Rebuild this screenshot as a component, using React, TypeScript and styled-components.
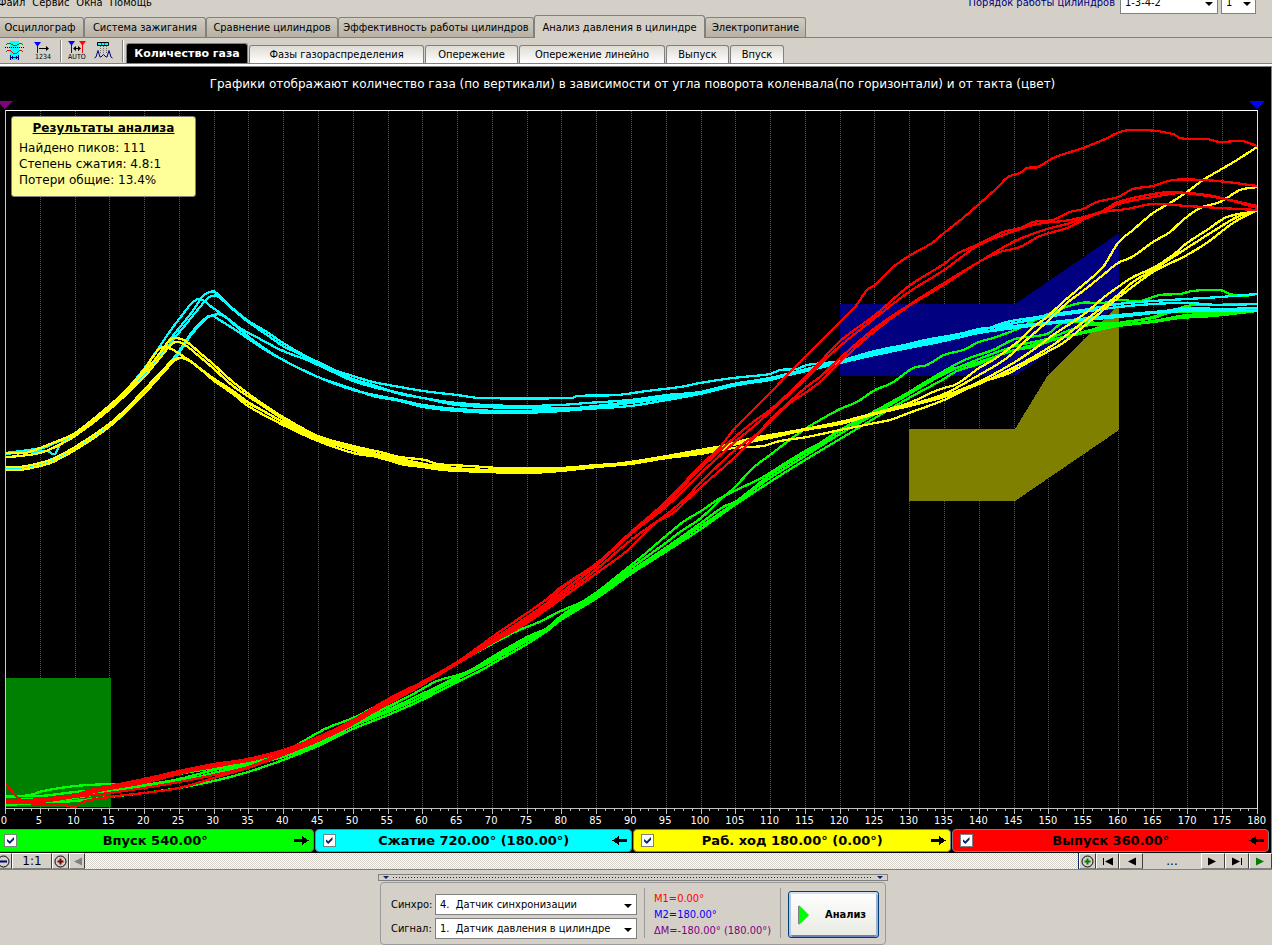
import React from 'react';
import styled, { createGlobalStyle } from 'styled-components';

const UI_FONT = '"DejaVu Sans Condensed", "DejaVu Sans", sans-serif';
const WIDE_FONT = '"DejaVu Sans", sans-serif';
const FACE = '#d4d0c8';
const SHADE = '#808080';

const GlobalStyle = createGlobalStyle`
  * { box-sizing: border-box; }
  body {
    margin: 0;
    background: ${FACE};
    font-family: ${UI_FONT};
    font-size: 11px;
    color: #000;
    overflow: hidden;
  }
  button, select, input { font: inherit; color: inherit; margin: 0; }
`;

const Window = styled.div`
  display: flex;
  flex-direction: column;
  height: 100vh;
  min-height: 560px;
  overflow: hidden;
`;

/* ---------- menu ---------- */

const MenuBar = styled.header`
  display: flex;
  align-items: center;
  flex: none;
  height: 25px;
  margin-top: -10px;
  padding-right: 16px;
`;

const MenuItem = styled.button`
  border: 0;
  padding: 0;
  margin-right: 7px;
  background: none;
  line-height: 14px;

  &:first-child { margin-left: -2px; }
`;

const OrderLabel = styled.label`
  margin-left: auto;
  margin-right: 5px;
  color: #000080;
`;

const Combo = styled.div<{ $width: number; $height: number }>`
  position: relative;
  width: ${(p) => p.$width}px;
  height: ${(p) => p.$height}px;

  &::after {
    content: '';
    position: absolute;
    right: 5px;
    top: 50%;
    margin-top: -1px;
    border: 4px solid transparent;
    border-top-color: #000;
    border-bottom: 0;
    pointer-events: none;
  }

  & + & { margin-left: 3px; }
`;

const ComboSelect = styled.select`
  appearance: none;
  display: block;
  width: 100%;
  height: 100%;
  padding: 0 14px 0 4px;
  border: 1px solid ${SHADE};
  border-radius: 0;
  background: #fff;
  outline: none;
`;

/* ---------- tabs ---------- */

const TabStrip = styled.nav`
  display: flex;
  align-items: flex-end;
  flex: none;
  height: 23px;
  margin-left: -4px;
  border-bottom: 1px solid ${SHADE};
`;

const MainTab = styled.button<{ $width: number; $active?: boolean }>`
  flex: none;
  width: ${(p) => p.$width}px;
  height: ${(p) => (p.$active ? 23 : 20)}px;
  margin-bottom: ${(p) => (p.$active ? -1 : 0)}px;
  padding: 0;
  border: 1px solid ${SHADE};
  border-bottom: 0;
  border-radius: 3px 3px 0 0;
  background: ${(p) => (p.$active ? FACE : 'linear-gradient(#d0ccc2, #b8b0a2)')};
  white-space: nowrap;
`;

const ToolBar = styled.div`
  display: flex;
  align-items: flex-end;
  flex: none;
  height: 26px;
  border-bottom: 1px solid ${SHADE};
`;

const ToolGroup = styled.div`
  display: flex;
  align-items: center;
  justify-content: space-between;
  align-self: center;
  width: 60px;
  height: 22px;
  padding: 0 9px 0 5px;
`;

const ToolButton = styled.button`
  display: flex;
  padding: 0;
  border: 0;
  background: none;
`;

const ToolDivider = styled.span`
  align-self: center;
  width: 2px;
  height: 22px;
  border-left: 1px solid ${SHADE};
  border-right: 1px solid #fff;
`;

const SubTabs = styled.nav`
  display: flex;
  align-items: flex-end;
  gap: 1px;
  margin-left: 2px;
`;

const SubTab = styled.button<{ $width: number; $active?: boolean }>`
  width: ${(p) => p.$width}px;
  height: ${(p) => (p.$active ? 20 : 18)}px;
  padding: 0;
  border: 1px solid ${SHADE};
  border-bottom: 0;
  border-radius: 3px 3px 0 0;
  background: ${(p) => (p.$active ? '#000' : 'linear-gradient(#dedbd4, #fff)')};
  color: ${(p) => (p.$active ? '#fff' : '#000')};
  font-family: ${(p) => (p.$active ? WIDE_FONT : UI_FONT)};
  font-weight: ${(p) => (p.$active ? 700 : 400)};
  white-space: nowrap;
`;

/* ---------- chart ---------- */

const ChartPanel = styled.main`
  position: relative;
  display: flex;
  flex-direction: column;
  flex: 1;
  min-height: 0;
  margin-top: 2px;
  border-top: 1px solid ${SHADE};
  border-right: 1px solid ${SHADE};
  background: #000;
  box-shadow: 0 -2px 0 #fff;
`;

const ChartTitle = styled.h1`
  flex: none;
  margin: 0;
  padding-right: 6px;
  color: #fff;
  font: 400 12px/34px ${WIDE_FONT};
  text-align: center;
  white-space: nowrap;
`;

const MarkerRow = styled.div`
  display: flex;
  justify-content: space-between;
  flex: none;
  height: 9px;
  margin: 0 6px 0 -3px;
`;

const Marker = styled.span<{ $color: string }>`
  width: 0;
  height: 0;
  border: 8px solid transparent;
  border-top-color: ${(p) => p.$color};
  border-bottom: 0;
`;

const Plot = styled.svg`
  display: block;
  flex: 1;
  min-height: 0;
  margin: 0 13px 0 5px;
  overflow: visible;
  shape-rendering: crispEdges;

  path, line, polyline { vector-effect: non-scaling-stroke; }
`;

const Ticks = styled.svg`
  display: block;
  flex: none;
  height: 5px;
  margin: 0 13px 0 5px;
  overflow: visible;
  shape-rendering: crispEdges;
`;

const AxisLabels = styled.div`
  display: flex;
  justify-content: space-between;
  flex: none;
  height: 15px;
  margin: 0 14px 0 4px;
  color: #fff;
  line-height: 14px;
`;

const AxisLabel = styled.span`
  display: flex;
  justify-content: center;
  width: 0;
`;

const ResultBox = styled.section`
  position: absolute;
  left: 11px;
  top: 49px;
  width: 185px;
  height: 81px;
  padding: 3px 7px;
  border: 1px solid ${SHADE};
  border-radius: 3px;
  background: #ffff99;
  font: 400 12px/16px ${WIDE_FONT};
  white-space: nowrap;
`;

const ResultTitle = styled.h2`
  margin: 0 0 4px;
  font-size: 12px;
  line-height: 16px;
  text-align: center;
  text-decoration: underline;
`;

const ResultLine = styled.p`
  margin: 0;
`;

const Legend = styled.div`
  display: grid;
  grid-template-columns: repeat(4, 1fr);
  gap: 1px;
  flex: none;
  margin: 0 2px 1px -4px;
`;

const LegendItem = styled.label<{ $color: string }>`
  display: flex;
  align-items: center;
  height: 23px;
  padding: 0 4px 0 7px;
  border: 1px solid ${SHADE};
  border-radius: 4px;
  background: ${(p) => p.$color};
  font: 700 13px/20px ${WIDE_FONT};
  white-space: nowrap;
`;

const LegendText = styled.span`
  flex: 1;
  text-align: center;
`;

const CheckBox = styled.input`
  appearance: none;
  width: 13px;
  height: 13px;
  border: 1px solid ${SHADE};
  background: #fff;

  &:checked::before {
    content: '';
    display: block;
    width: 7px;
    height: 7px;
    margin: 2px;
    background: #0a246a;
    clip-path: polygon(0 28%, 40% 62%, 100% 0, 100% 40%, 40% 100%, 0 62%);
  }
`;

/* ---------- scroll row ---------- */

const ScrollRow = styled.div`
  display: flex;
  flex: none;
  height: 17px;
  margin-left: -5px;
  border-bottom: 1px solid ${SHADE};
  background: ${FACE};
`;

const ScrollButton = styled.button<{ $width: number; $flat?: boolean }>`
  display: flex;
  align-items: center;
  justify-content: center;
  flex: none;
  width: ${(p) => p.$width}px;
  height: 16px;
  padding: 0;
  border: 1px solid ${(p) => (p.$flat ? FACE : '#fff')};
  border-right-color: ${(p) => (p.$flat ? FACE : '#404040')};
  border-bottom-color: ${(p) => (p.$flat ? FACE : SHADE)};
  background: ${FACE};
  font: 400 12px/12px ${WIDE_FONT};

  svg { flex: none; }
`;

const ScrollTrack = styled.div`
  flex: 1;
  border-right: 1px solid #0a246a;
  background: repeating-conic-gradient(#fff 0 25%, ${FACE} 0 50%) 0 0 / 2px 2px;
`;

/* ---------- bottom panel ---------- */

const Dock = styled.footer`
  display: flex;
  flex-direction: column;
  align-items: center;
  flex: none;
  padding: 4px 6px 0 0;
`;

const Splitter = styled.div`
  display: flex;
  align-items: center;
  justify-content: space-between;
  width: 510px;
  height: 7px;
  padding: 0 4px;
  border: 1px solid ${SHADE};
`;

const SplitterArrow = styled.span`
  border: 3px solid transparent;
  border-top-color: #0a246a;
  border-bottom: 0;
`;

const SplitterDots = styled.span`
  flex: 1;
  height: 1px;
  margin: 0 4px;
  background: repeating-linear-gradient(90deg, #0a246a 0 1px, transparent 1px 3px);
`;

const ControlPanel = styled.section`
  display: flex;
  width: 506px;
  height: 63px;
  margin-top: 1px;
  padding: 5px 6px 5px 10px;
  border: 1px solid #9a9a9a;
  border-radius: 4px;
`;

const SourceGrid = styled.div`
  display: grid;
  grid-template-columns: 40px 202px;
  column-gap: 4px;
  row-gap: 3px;
  align-content: start;
  align-items: center;
  padding-top: 6px;
`;

const PanelDivider = styled.span`
  width: 1px;
  height: 50px;
  margin-left: 7px;
  background: #9a9a9a;
`;

const Readout = styled.div`
  width: 128px;
  padding: 3px 0 0 9px;
  line-height: 16px;
  white-space: nowrap;
`;

const ReadoutLine = styled.div<{ $color: string }>`
  color: ${(p) => p.$color};
`;

const AnalyzeButton = styled.button`
  display: flex;
  align-items: center;
  gap: 16px;
  width: 91px;
  height: 47px;
  margin: 3px 0 0 7px;
  padding: 0 0 0 9px;
  border: 1px solid #003c74;
  border-radius: 3px;
  background: linear-gradient(#fff, #e9e9e2);
  box-shadow: inset 0 2px 0 #cee0f5, inset -2px 0 0 #9cb0d8, inset 2px 0 0 #b4c6e6, inset 0 -2px 0 #6982ba;
  font: 700 11px/14px ${UI_FONT};
`;

/* ---------- chart data (plot units) ---------- */

type Pt = [number, number];

const pts = (s: string): Pt[] => s.split(' ').map((p) => p.split(',').map(Number) as Pt);

const smooth = (s: string): string => {
  const p = pts(s);
  let d = `M${p[0][0]} ${p[0][1]}`;
  for (let i = 0; i < p.length - 1; i++) {
    const a = p[Math.max(i - 1, 0)];
    const b = p[i];
    const c = p[i + 1];
    const e = p[Math.min(i + 2, p.length - 1)];
    const h = (c[0] - b[0]) / 3;
    const m1 = c[0] === a[0] ? 0 : (c[1] - a[1]) / (c[0] - a[0]);
    const m2 = e[0] === b[0] ? 0 : (e[1] - b[1]) / (e[0] - b[0]);
    d += `C${b[0] + h} ${b[1] + m1 * h} ${c[0] - h} ${c[1] - m2 * h} ${c[0]} ${c[1]}`;
  }
  return d;
};

const GREEN = [
  '6,797 30,795 43,791 75,786 109,784 133,783 179,774 214,768 248,762 283,752 300,743 327,728 353,718 388,700 417,685 457,663 492,644 517,631 537,623 563,610 582,602 597,593 631,568 667,542 680,532 701,518 720,500 735,487 753,468 770,455 787,442 805,429 820,420 840,409 857,402 875,390 892,383 913,368 927,365 944,355 963,350 979,342 993,338 1015,330 1033,321 1053,312 1080,303 1103,303 1118,300 1140,301 1160,295 1180,294 1192,291 1220,290 1230,294 1243,296 1257,294',
  '6,796 40,796 75,792 109,789 144,785 179,779 214,770 248,763 283,754 318,742 353,723 388,707 417,692 437,681 467,672 492,657 527,637 547,628 561,616 597,592 631,565 640,558 667,535 683,522 701,511 717,500 728,494 747,485 763,477 787,462 805,451 820,443 840,430 875,411 909,392 944,371 967,359 993,350 1015,339 1047,334 1063,323 1103,323 1120,323 1153,317 1187,306 1207,305 1257,304',
  '6,805 40,803 75,801 109,797 144,793 179,788 214,781 248,772 283,760 318,746 353,729 388,715 422,700 457,682 480,671 492,664 527,644 547,631 561,620 597,598 631,574 667,551 701,529 735,505 770,482 805,460 820,451 840,439 875,418 909,398 944,379 957,371 979,364 1007,352 1037,346 1053,340 1103,329 1118,326 1153,322 1180,318 1213,316 1257,311',
  '6,800 40,799 75,797 109,791 144,787 179,781 214,773 248,764 283,755 318,743 353,725 388,710 422,694 457,677 480,666 492,659 527,639 547,629 561,617 597,594 631,571 667,547 701,523 723,507 735,502 747,493 770,475 805,453 820,444 840,431 875,412 909,392 944,372 979,362 1015,350 1047,341 1083,332 1118,323 1153,318 1173,312 1220,313 1257,309',
  '6,803 40,802 75,798 109,792 144,786 179,780 214,774 248,765 283,757 318,744 353,726 388,712 422,697 457,679 492,661 527,641 547,630 561,618 597,596 631,573 667,549 701,526 735,503 770,478 805,456 840,434 875,414 909,394 944,374 979,359 1015,346 1047,339 1083,326 1118,325 1153,321 1187,315 1220,314 1257,310',
];

const CYAN = [
  '6,453 40,448 55,442 75,433 109,407 128,388 144,369 160,346 173,327 180,318 192,303 200,299 213,308 227,318 240,328 260,339 283,351 307,360 333,372 353,381 377,388 400,393 423,398 457,403 513,406 560,405 587,403 630,400 667,395 700,392 733,384 770,378 807,369 840,362 875,353 909,345 944,337 979,330 1015,323 1053,316 1083,312 1118,307 1153,304 1187,303 1220,305 1257,304',
  '6,454 40,449 55,443 75,434 109,409 144,372 160,354 168,342 180,327 192,312 203,296 210,292 215,292 230,306 247,320 267,332 283,343 300,353 318,362 337,371 353,376 373,382 400,387 423,391 457,395 480,398 572,398 577,396 617,395 647,391 680,387 700,383 733,378 770,374 780,370 797,369 807,365 840,361 875,351 909,344 930,339 979,331 1007,322 1037,317 1053,314 1083,310 1118,304 1153,301 1187,299 1220,297 1257,294',
  '6,457 20,456 40,453 53,448 75,436 109,410 144,376 173,340 187,323 200,307 208,298 217,296 230,307 247,321 267,335 283,346 300,354 318,363 353,379 373,385 400,394 423,398 457,405 513,408 580,408 630,403 667,398 700,393 733,386 770,379 807,370 840,363 875,354 909,347 944,340 979,333 1015,326 1047,323 1083,320 1118,317 1153,313 1187,308 1220,309 1257,308',
  '6,469 20,469 40,465 53,460 75,450 109,427 128,410 144,393 163,372 177,356 183,347 192,334 207,318 213,315 222,315 237,327 250,338 267,350 283,360 318,377 353,389 373,396 400,401 423,407 457,411 500,413 547,412 587,409 630,406 667,400 700,394 733,386 770,379 807,371 840,363 875,355 909,348 944,341 979,333 1015,328 1047,324 1083,319 1118,316 1153,313 1187,311 1257,311',
  '6,468 20,468 40,464 75,448 109,425 144,391 163,370 177,354 192,332 207,317 213,316 218,319 237,331 250,340 267,351 283,360 318,377 353,390 400,400 423,405 457,409 500,411 547,411 577,408 630,402 667,396 700,393 733,385 770,380 807,369 840,361 875,351 909,346 944,339 979,329 1015,326 1053,322 1118,315 1187,310 1257,311',
  '30,452 47,451 55,454 60,445 70,438',
];

const YELLOW = [
  '6,453 25,453 40,448 55,442 75,433 109,406 128,388 144,370 158,350 165,347 175,351 187,359 213,378 233,392 248,403 267,413 283,422 318,437 353,449 400,461 443,467 487,470 527,470 560,469 597,466 630,463 667,457 700,452 733,443 770,436 805,429 840,423 875,413 909,403 933,392 944,388 957,384 979,368 993,360 1007,350 1020,340 1032,328 1047,317 1063,302 1083,285 1103,267 1118,243 1133,230 1153,213 1170,203 1187,192 1203,180 1220,170 1237,160 1257,147',
  '6,453 25,453 40,448 55,442 75,434 109,408 144,373 160,353 170,340 177,338 187,342 200,353 213,364 233,382 260,402 283,417 318,436 353,446 380,452 400,457 425,460 437,464 470,466 500,468 560,468 597,465 630,463 667,457 700,451 720,447 753,438 783,433 840,422 875,413 909,405 944,394 979,375 1007,358 1023,343 1047,322 1067,303 1083,291 1103,275 1118,263 1132,257 1153,242 1170,232 1183,220 1200,208 1220,202 1240,190 1257,187',
  '6,457 20,456 40,453 53,448 75,436 109,410 144,377 160,358 173,343 182,343 200,357 213,368 233,386 260,404 283,419 318,437 353,448 400,459 443,467 487,470 540,471 597,466 630,462 667,456 700,450 733,444 770,435 805,430 840,423 875,414 909,406 944,396 979,382 1015,362 1033,350 1053,335 1083,315 1103,298 1118,287 1133,277 1153,268 1173,255 1187,243 1207,230 1227,217 1257,211',
  '6,467 20,467 40,463 53,459 75,447 109,424 128,407 144,390 163,370 173,360 182,358 193,363 213,380 233,394 248,406 283,425 318,441 353,453 383,458 400,464 423,467 443,470 487,472 527,473 560,471 597,467 630,464 667,458 700,454 733,448 763,446 780,441 807,437 840,430 875,423 890,420 909,413 944,400 979,383 1007,374 1027,363 1047,352 1063,343 1083,327 1118,298 1153,272 1173,262 1187,255 1208,242 1233,223 1257,210',
  '6,470 20,470 40,466 53,462 75,450 109,427 144,394 163,373 177,359 187,359 200,369 213,378 233,391 248,402 267,413 283,422 318,439 353,450 400,463 443,469 487,471 527,472 560,470 597,467 630,463 667,457 700,452 733,445 770,438 805,430 840,424 875,414 909,406 944,397 979,384 1015,367 1053,345 1083,322 1118,295 1133,282 1153,270 1187,248 1220,227 1237,217 1257,210',
];

const RED = [
  '6,802 40,799 75,795 87,791 109,786 144,779 179,771 214,764 248,759 283,750 318,737 353,720 388,699 422,682 457,662 477,648 492,637 527,613 547,599 561,587 597,563 631,532 660,507 680,487 701,465 720,447 735,428 753,410 770,393 792,370 820,342 840,322 855,307 867,290 875,285 892,268 909,256 932,243 944,233 963,218 979,204 997,188 1008,177 1020,173 1027,168 1038,167 1053,158 1083,148 1103,140 1123,131 1147,130 1173,134 1180,138 1193,139 1207,139 1220,142 1242,141 1257,146',
  '6,800 40,800 75,796 109,788 144,781 179,773 214,767 248,760 283,751 318,738 353,721 388,701 422,683 457,662 492,640 527,617 547,603 561,589 597,563 631,533 667,503 701,468 735,437 753,422 770,410 792,390 805,377 820,362 840,341 875,315 909,286 944,264 957,254 979,244 1003,232 1020,228 1033,222 1053,220 1070,212 1083,209 1097,202 1118,197 1133,189 1153,186 1173,180 1203,180 1227,182 1257,186',
  '6,803 40,802 75,797 109,793 144,788 179,782 214,775 248,767 283,753 318,739 353,723 388,702 422,684 457,663 492,641 527,619 547,605 561,593 597,565 631,534 667,506 701,473 735,442 753,427 770,412 805,380 820,365 840,346 875,318 909,292 944,270 979,245 1015,231 1037,224 1070,220 1100,212 1118,202 1153,194 1173,192 1193,194 1220,198 1257,206',
  '6,783 14,794 25,802 40,804 60,804 75,807 82,802 109,797 144,793 179,788 214,778 248,768 283,755 318,741 353,724 388,703 422,684 457,663 492,642 527,621 561,596 597,569 631,540 667,514 687,497 701,482 735,450 758,433 770,420 805,388 820,377 840,358 875,328 909,305 944,283 979,262 1015,241 1047,229 1067,224 1107,210 1118,204 1153,197 1180,193 1213,196 1257,208',
  '6,800 40,801 75,796 109,789 144,783 179,774 214,766 248,761 283,752 318,740 353,723 388,704 422,685 457,664 492,643 527,623 561,599 597,573 627,551 637,541 657,522 673,513 701,487 735,457 770,422 790,403 805,393 820,382 840,362 875,331 909,306 944,285 979,262 1000,252 1020,247 1040,236 1067,228 1087,218 1103,212 1127,209 1153,204 1187,206 1220,208 1257,210',
];

const SERIES: [string, string[]][] = [
  ['#00ff00', GREEN],
  ['#00ffff', CYAN],
  ['#ffff00', YELLOW],
  ['#ff0000', RED],
];

const DEGREES = Array.from({ length: 37 }, (_, i) => i * 5);
const MINOR = Array.from({ length: 145 }, (_, i) => i);
const degX = (deg: number) => 5.5 + (deg * 1252) / 180;

const Chart = () => (
  <Plot viewBox="5 110 1253 699" preserveAspectRatio="none" role="img" aria-label="Количество газа">
    {DEGREES.slice(1, -1).map((d) => (
      <line key={d} x1={degX(d)} x2={degX(d)} y1={111} y2={808} stroke="#585858" strokeDasharray="1 1" />
    ))}
    <polygon points="5,678 111,678 111,807 5,807" fill="#008000" />
    <polygon points="840,304 1015,304 1119,233 1119,305 1015,376 840,376" fill="#000080" />
    <polygon points="909,429 1015,429 1048,375 1083,340 1119,305 1119,430 1015,501 909,501" fill="#808000" />
    <line x1={5} x2={1258} y1={110.5} y2={110.5} stroke="#fff" />
    <line x1={5} x2={1258} y1={808.5} y2={808.5} stroke="#c0c0c0" />
    {SERIES.map(([color, curves]) =>
      curves.map((c, i) => <path key={color + i} d={smooth(c)} fill="none" stroke={color} strokeWidth={2.3} />),
    )}
    <line x1={5.5} x2={5.5} y1={110} y2={809} stroke="#80ff80" />
    <line x1={1257.5} x2={1257.5} y1={110} y2={809} stroke="#ffff00" />
  </Plot>
);

/* ---------- glyphs ---------- */

const Cross = ({ color, minus }: { color: string; minus?: boolean }) => (
  <svg width="13" height="13" viewBox="0 0 13 13">
    <circle cx="6.5" cy="6.5" r="5.5" fill={FACE} stroke="#000" />
    <path d={minus ? 'M3 6.5h7' : 'M3.5 6.5h6M6.5 3.5v6'} stroke={color} strokeWidth="2" />
  </svg>
);

const Play = ({ color = '#000', back, bar }: { color?: string; back?: boolean; bar?: boolean }) => (
  <svg width="12" height="9" viewBox="0 0 12 9">
    <g transform={back ? 'matrix(-1 0 0 1 12 0)' : undefined}>
      <path d="M1 0.5v8l8-4z" fill={color} />
      {bar && <path d="M10 1h1v7h-1z" fill={color} />}
    </g>
  </svg>
);

const LegendArrow = ({ back }: { back?: boolean }) => (
  <svg width="15" height="9" viewBox="0 0 15 9" shapeRendering="crispEdges">
    <path d={back ? 'M15 3H7V0L0 4.5L7 9V6H15z' : 'M0 3H8V0L15 4.5L8 9V6H0z'} />
  </svg>
);

const WavesIcon = () => (
  <svg width="19" height="19" viewBox="0 0 19 19" fill="none" shapeRendering="crispEdges">
    <path d="M5 0h9v19h-9z" fill="#00ffff" />
    <path d="M0.500 4.500l2-2h3l3 2h3l3-2h2l2 2" stroke="#008000" />
    <path d="M0 6.500h19" stroke="#000" strokeDasharray="1 1" />
    <path d="M0.500 11.500l2-2h3l3 3h3l3-3h2l2 2" stroke="#ff0000" />
    <path d="M5 16.500h9M5.500 14v5M13.500 14v5M7.500 15v3M11.500 15v3" stroke="#000080" />
  </svg>
);

const PinText = styled.text`
  font: 400 7px ${UI_FONT};
  fill: #000;
`;

const NumberIcon = () => (
  <svg width="17" height="19" viewBox="0 0 17 19" overflow="visible">
    <path d="M0 1h7L4 5v7H3V5z" fill="#0000ff" />
    <path d="M5 7h7V5l3 2.500-3 2.500V8H5z" fill="#000" />
    <PinText x="1" y="18">1234</PinText>
  </svg>
);

const AutoIcon = () => (
  <svg width="20" height="19" viewBox="0 0 20 19" overflow="visible">
    <path d="M1 0h7L5 4v8H4V4z" fill="#0000ff" />
    <path d="M12 0h7l-3 4v8h-1V4z" fill="#ff0000" />
    <path d="M6 7.500l3-2.500v2h2V5l3 2.500-3 2.500V8H9v2z" fill="#000" />
    <PinText x="1" y="18">AUTO</PinText>
  </svg>
);

const PeaksIcon = () => (
  <svg width="19" height="19" viewBox="0 0 19 19" fill="none">
    <path d="M3.500 1.500h11v3h-11z" fill="#00ffff" stroke="#000" />
    <path d="M7.500 2v2M10.500 2v2" stroke="#008080" />
    <path d="M6.500 5v8M9.500 5v8M12.500 5v8" stroke="#707070" strokeDasharray="1 1" />
    <path d="M0.500 17l1.500-1 2-6.500L6 16h1l2.500-2.500L12 16h1l2-6.500 2 6.500 1.500 1" stroke="#000080" />
  </svg>
);

const MAIN_TABS: [string, number][] = [
  ['Осциллограф', 88],
  ['Система зажигания', 122],
  ['Сравнение цилиндров', 132],
  ['Эффективность работы цилиндров', 196],
  ['Анализ давления в цилиндре', 171],
  ['Электропитание', 101],
];

const SUB_TABS: [string, number][] = [
  ['Количество газа', 122],
  ['Фазы газораспределения', 175],
  ['Опережение', 93],
  ['Опережение линейно', 146],
  ['Выпуск', 63],
  ['Впуск', 54],
];

const LEGEND: [string, string, boolean][] = [
  ['Впуск 540.00°', '#00ff00', false],
  ['Сжатие 720.00° (180.00°)', '#00ffff', true],
  ['Раб. ход 180.00° (0.00°)', '#ffff00', false],
  ['Выпуск 360.00°', '#ff0000', true],
];

export default function App() {
  return (
    <Window>
      <GlobalStyle />
      <MenuBar>
        {['Файл', 'Сервис', 'Окна', 'Помощь'].map((m) => (
          <MenuItem key={m}>{m}</MenuItem>
        ))}
        <OrderLabel htmlFor="order">Порядок работы цилиндров</OrderLabel>
        <Combo $width={98} $height={22}>
          <ComboSelect id="order">
            <option>1-3-4-2</option>
          </ComboSelect>
        </Combo>
        <Combo $width={35} $height={22}>
          <ComboSelect aria-label="Цилиндр">
            <option>1</option>
          </ComboSelect>
        </Combo>
      </MenuBar>

      <TabStrip>
        {MAIN_TABS.map(([t, w], i) => (
          <MainTab key={t} $width={w} $active={i === 4}>{t}</MainTab>
        ))}
      </TabStrip>

      <ToolBar>
        <ToolGroup>
          <ToolButton aria-label="Фазы"><WavesIcon /></ToolButton>
          <ToolButton aria-label="Нумерация"><NumberIcon /></ToolButton>
        </ToolGroup>
        <ToolDivider />
        <ToolGroup>
          <ToolButton aria-label="Авто"><AutoIcon /></ToolButton>
          <ToolButton aria-label="Пики"><PeaksIcon /></ToolButton>
        </ToolGroup>
        <ToolDivider />
        <SubTabs>
          {SUB_TABS.map(([t, w], i) => (
            <SubTab key={t} $width={w} $active={i === 0}>{t}</SubTab>
          ))}
        </SubTabs>
      </ToolBar>

      <ChartPanel>
        <ChartTitle>
          Графики отображают количество газа (по вертикали) в зависимости от угла поворота коленвала(по горизонтали) и от такта (цвет)
        </ChartTitle>
        <MarkerRow>
          <Marker $color="#800080" />
          <Marker $color="#0000ff" />
        </MarkerRow>
        <Chart />
        <Ticks viewBox="5 0 1253 5" preserveAspectRatio="none">
          {MINOR.map((i) => (
            <line key={i} x1={degX(i * 1.25)} x2={degX(i * 1.25)} y1={0} y2={i % 4 ? 2 : 5} stroke="#c0c0c0" />
          ))}
        </Ticks>
        <AxisLabels>
          {DEGREES.map((d) => (
            <AxisLabel key={d}>{d}</AxisLabel>
          ))}
        </AxisLabels>
        <Legend>
          {LEGEND.map(([text, color, back]) => (
            <LegendItem key={text} $color={color}>
              <CheckBox type="checkbox" defaultChecked />
              <LegendText>{text}</LegendText>
              <LegendArrow back={back} />
            </LegendItem>
          ))}
        </Legend>
        <ResultBox>
          <ResultTitle>Результаты анализа</ResultTitle>
          <ResultLine>Найдено пиков: 111</ResultLine>
          <ResultLine>Степень сжатия: 4.8:1</ResultLine>
          <ResultLine>Потери общие: 13.4%</ResultLine>
        </ResultBox>
      </ChartPanel>

      <ScrollRow>
        <ScrollButton $width={17} aria-label="Уменьшить"><Cross color="#000080" minus /></ScrollButton>
        <ScrollButton $width={40}>1:1</ScrollButton>
        <ScrollButton $width={17} aria-label="Увеличить"><Cross color="#800000" /></ScrollButton>
        <ScrollButton $width={16} aria-label="Влево"><Play color="#808080" back /></ScrollButton>
        <ScrollTrack />
        <ScrollButton $width={17} aria-label="Добавить"><Cross color="#008000" /></ScrollButton>
        <ScrollButton $width={23} aria-label="В начало"><Play back bar /></ScrollButton>
        <ScrollButton $width={24} aria-label="Назад"><Play back /></ScrollButton>
        <ScrollButton $width={58} $flat>...</ScrollButton>
        <ScrollButton $width={24} aria-label="Вперёд"><Play /></ScrollButton>
        <ScrollButton $width={24} aria-label="В конец"><Play bar /></ScrollButton>
        <ScrollButton $width={23} aria-label="Пуск"><Play color="#008000" /></ScrollButton>
      </ScrollRow>

      <Dock>
        <Splitter>
          <SplitterArrow />
          <SplitterDots />
          <SplitterArrow />
        </Splitter>
        <ControlPanel>
          <SourceGrid>
            <label htmlFor="sync">Синхро:</label>
            <Combo $width={202} $height={21}>
              <ComboSelect id="sync">
                <option>4.&nbsp; Датчик синхронизации</option>
              </ComboSelect>
            </Combo>
            <label htmlFor="signal">Сигнал:</label>
            <Combo $width={202} $height={21}>
              <ComboSelect id="signal">
                <option>1.&nbsp; Датчик давления в цилиндре</option>
              </ComboSelect>
            </Combo>
          </SourceGrid>
          <PanelDivider />
          <Readout>
            <ReadoutLine $color="#ff0000">M1=0.00°</ReadoutLine>
            <ReadoutLine $color="#0000ff">M2=180.00°</ReadoutLine>
            <ReadoutLine $color="#800080">ΔM=-180.00° (180.00°)</ReadoutLine>
          </Readout>
          <PanelDivider />
          <AnalyzeButton>
            <svg width="11" height="20" viewBox="0 0 11 20">
              <path d="M1 0v20l10-10z" fill="#00ff00" />
              <path d="M0.500 1v18" stroke="#808080" />
            </svg>
            Анализ
          </AnalyzeButton>
        </ControlPanel>
      </Dock>
    </Window>
  );
}
